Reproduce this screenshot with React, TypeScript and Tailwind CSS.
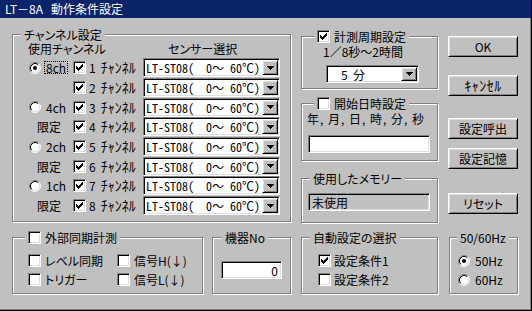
import React from "react";

const sunken =
  "border border-t-[#808080] border-l-[#808080] border-b-white border-r-white shadow-[inset_1px_1px_0_#000,inset_-1px_-1px_0_#dfdfdf]";
const raised =
  "border border-t-white border-l-white border-r-black border-b-black shadow-[inset_1px_1px_0_#dfdfdf,inset_-1px_-1px_0_#808080]";
const mono = "font-['Noto_Sans_Mono_CJK_JP','Noto_Sans_CJK_JP',monospace]";

function Check({ checked }: { checked?: boolean }) {
  return (
    <span className={"inline-flex h-[13px] w-[13px] shrink-0 items-center justify-center bg-white " + sunken}>
      {checked && (
        <svg width="7" height="7" viewBox="0 0 7 7" shapeRendering="crispEdges">
          <path
            d="M0 2h1v3H0zM1 3h1v3H1zM2 4h1v3H2zM3 3h1v3H3zM4 2h1v3H4zM5 1h1v3H5zM6 0h1v3H6z"
            fill="#000"
          />
        </svg>
      )}
    </span>
  );
}

function Radio({ checked }: { checked?: boolean }) {
  return (
    <svg width="12" height="12" viewBox="0 0 12 12" className="shrink-0">
      <circle cx="6" cy="6" r="5" fill="#fff" />
      <path d="M2.11 9.89A5.5 5.5 0 0 1 9.89 2.11" stroke="#808080" fill="none" />
      <path d="M9.89 2.11A5.5 5.5 0 0 1 2.11 9.89" stroke="#fff" fill="none" />
      <path d="M2.82 9.18A4.5 4.5 0 0 1 9.18 2.82" stroke="#000" fill="none" />
      <path d="M9.18 2.82A4.5 4.5 0 0 1 2.82 9.18" stroke="#dfdfdf" fill="none" />
      {checked && <circle cx="6" cy="6" r="2" fill="#000" />}
    </svg>
  );
}

function DropBtn() {
  return (
    <div className={"flex h-full w-[16px] shrink-0 items-center justify-center bg-[#c0c0c0] " + raised}>
      <svg width="7" height="4" viewBox="0 0 7 4" shapeRendering="crispEdges">
        <path d="M0 0h7v1H0zM1 1h5v1H1zM2 2h3v1H2zM3 3h1v1H3z" fill="#000" />
      </svg>
    </div>
  );
}

function Combo({ text, className, textClass }: { text: string; className: string; textClass: string }) {
  return (
    <div className={"flex shrink-0 bg-white p-[1px] " + sunken + " " + className}>
      <div className={"flex flex-1 items-center whitespace-pre " + textClass}>{text}</div>
      <DropBtn />
    </div>
  );
}

function Group({
  legend,
  legendPos,
  className,
  children,
}: {
  legend: React.ReactNode;
  legendPos: string;
  className: string;
  children?: React.ReactNode;
}) {
  return (
    <div className={"relative shrink-0 border border-[#808080] shadow-[inset_1px_1px_0_#fff,1px_1px_0_#fff] " + className}>
      <div className={"absolute -top-[7px] flex h-[13px] items-center gap-[4px] bg-[#c0c0c0] px-[3px] leading-[12px] " + legendPos}>
        {legend}
      </div>
      {children}
    </div>
  );
}

function Btn({ children, className }: { children: React.ReactNode; className: string }) {
  return (
    <div className={"flex h-[21px] w-[70px] items-center justify-center bg-[#c0c0c0] leading-[13px] " + raised + " " + className}>
      {children}
    </div>
  );
}

type Row = { kind: "radio" | "limit" | "none"; label?: string; on?: boolean; focus?: boolean };
const rows: Row[] = [
  { kind: "radio", label: "8ch", on: true, focus: true },
  { kind: "none" },
  { kind: "radio", label: "4ch" },
  { kind: "limit" },
  { kind: "radio", label: "2ch" },
  { kind: "limit" },
  { kind: "radio", label: "1ch" },
  { kind: "limit" },
];

export default function App() {
  return (
    <div className="h-[311px] w-[532px] overflow-hidden border-b border-r border-black bg-[#c0c0c0] font-['Noto_Sans_CJK_JP',sans-serif] text-[12px] leading-[13px] text-black shadow-[inset_-1px_-1px_0_#808080] [font-feature-settings:'palt']">
      {/* title bar */}
      <div className="flex h-[18px] items-center bg-[#0a246a] pl-[5px] text-[12px] leading-[18px] text-white">
        <span>LT－8A</span>
        <span className="ml-[8px]">動作条件設定</span>
      </div>

      {/* top section */}
      <div className="flex h-[219px] items-start pl-[12px]">
        {/* channel group */}
        <Group className="mt-[16px] h-[188px] w-[279px]" legendPos="left-[8px]" legend={<span>チャンネル設定</span>}>
          <div className="flex pt-[8px] leading-[12px]">
            <span className="w-[155px] pl-[15px]">使用チャンネル</span>
            <span>センサー選択</span>
          </div>
          <div className="mt-[3px] flex flex-col">
            {rows.map((r, i) => (
              <div key={i} className="flex h-[19.7px] items-center">
                <div className="flex w-[60px] items-center">
                  {r.kind === "radio" && (
                    <div className="flex items-center pl-[16px]">
                      <Radio checked={r.on} />
                      <span
                        className={
                          "ml-[3px] border border-dotted px-[1px] leading-[11px] " +
                          (r.focus ? "border-black" : "border-transparent")
                        }
                      >
                        {r.label}
                      </span>
                    </div>
                  )}
                  {r.kind === "limit" && <span className="pl-[24px]">限定</span>}
                </div>
                <Check checked />
                <div className="ml-[3px] flex w-[54px] items-center whitespace-pre">
                  <span>{i + 1}</span>
                  <span className="ml-[5px] text-[14px] leading-[13px]">ﾁｬﾝﾈﾙ</span>
                </div>
                <Combo
                  className="h-[19px] w-[137px]"
                  textClass={"pl-[1px] " + mono}
                  text={"LT-ST08(  0～ 60℃)"}
                />
              </div>
            ))}
          </div>
        </Group>

        {/* middle column */}
        <div className="ml-[10px] mt-[18px] flex w-[137px] flex-col">
          <Group
            className="h-[53px]"
            legendPos="left-[12px]"
            legend={
              <>
                <Check checked />
                <span>計測周期設定</span>
              </>
            }
          >
            <div className="pl-[21px] pt-[9px] leading-[12px]">1／8秒～2時間</div>
            <Combo className="ml-[24px] mt-[7px] h-[18px] w-[93px]" textClass="pl-[13px]" text={"5  分"} />
          </Group>

          <Group
            className="mt-[14px] h-[58px]"
            legendPos="left-[12px]"
            legend={
              <>
                <Check />
                <span>開始日時設定</span>
              </>
            }
          >
            <div className="whitespace-pre pl-[5px] pt-[9px] leading-[12px] tracking-[1px]">年, 月, 日, 時, 分, 秒</div>
            <div className={"ml-[6px] mt-[10px] h-[18px] w-[122px] bg-white " + sunken} />
          </Group>

          <Group className="mt-[17px] h-[45px]" legendPos="left-[8px]" legend={<span>使用したメモリー</span>}>
            <div className={"ml-[6px] mt-[14px] flex h-[18px] w-[122px] items-center bg-[#c0c0c0] pl-[3px] " + sunken}>
              未使用
            </div>
          </Group>
        </div>

        {/* buttons */}
        <div className="ml-[10px] mt-[18px] flex flex-col">
          <Btn className="">OK</Btn>
          <Btn className="mt-[18px]">
            <span className="text-[14px] tracking-[0.5px]">ｷｬﾝｾﾙ</span>
          </Btn>
          <Btn className="mt-[22px]">設定呼出</Btn>
          <Btn className="mt-[9px]">設定記憶</Btn>
          <Btn className="mt-[24px]">リセット</Btn>
        </div>
      </div>

      {/* bottom section */}
      <div className="flex items-start pl-[12px]">
        <Group
          className="h-[57px] w-[191px]"
          legendPos="left-[12px]"
          legend={
            <>
              <Check />
              <span>外部同期計測</span>
            </>
          }
        >
          <div className="grid grid-cols-[89px_auto] pl-[15px] pt-[13px]">
            <div className="flex h-[19px] items-center">
              <Check />
              <span className="ml-[4px]">レベル同期</span>
            </div>
            <div className="flex h-[19px] items-center">
              <Check />
              <span className="ml-[4px]">信号H(↓)</span>
            </div>
            <div className="flex h-[19px] items-center">
              <Check />
              <span className="ml-[4px]">トリガー</span>
            </div>
            <div className="flex h-[19px] items-center">
              <Check />
              <span className="ml-[4px]">信号L(↓)</span>
            </div>
          </div>
        </Group>

        <Group className="ml-[9px] h-[57px] w-[79px]" legendPos="left-[9px]" legend={<span>機器No</span>}>
          <div className={"ml-[8px] mt-[23px] flex h-[18px] w-[61px] items-center justify-end bg-white pr-[3px] " + sunken}>
            0
          </div>
        </Group>

        <Group className="ml-[10px] h-[57px] w-[137px]" legendPos="left-[8px]" legend={<span>自動設定の選択</span>}>
          <div className="flex flex-col pl-[16px] pt-[13px]">
            <div className="flex h-[19px] items-center">
              <Check checked />
              <span className="ml-[3px]">設定条件1</span>
            </div>
            <div className="flex h-[19px] items-center">
              <Check />
              <span className="ml-[3px]">設定条件2</span>
            </div>
          </div>
        </Group>

        <Group className="ml-[11px] h-[57px] w-[69px]" legendPos="left-[7px]" legend={<span>50/60Hz</span>}>
          <div className="flex flex-col pl-[8px] pt-[13px]">
            <div className="flex h-[19px] items-center">
              <Radio checked />
              <span className="ml-[5px]">50Hz</span>
            </div>
            <div className="flex h-[19px] items-center">
              <Radio />
              <span className="ml-[5px]">60Hz</span>
            </div>
          </div>
        </Group>
      </div>
    </div>
  );
}
